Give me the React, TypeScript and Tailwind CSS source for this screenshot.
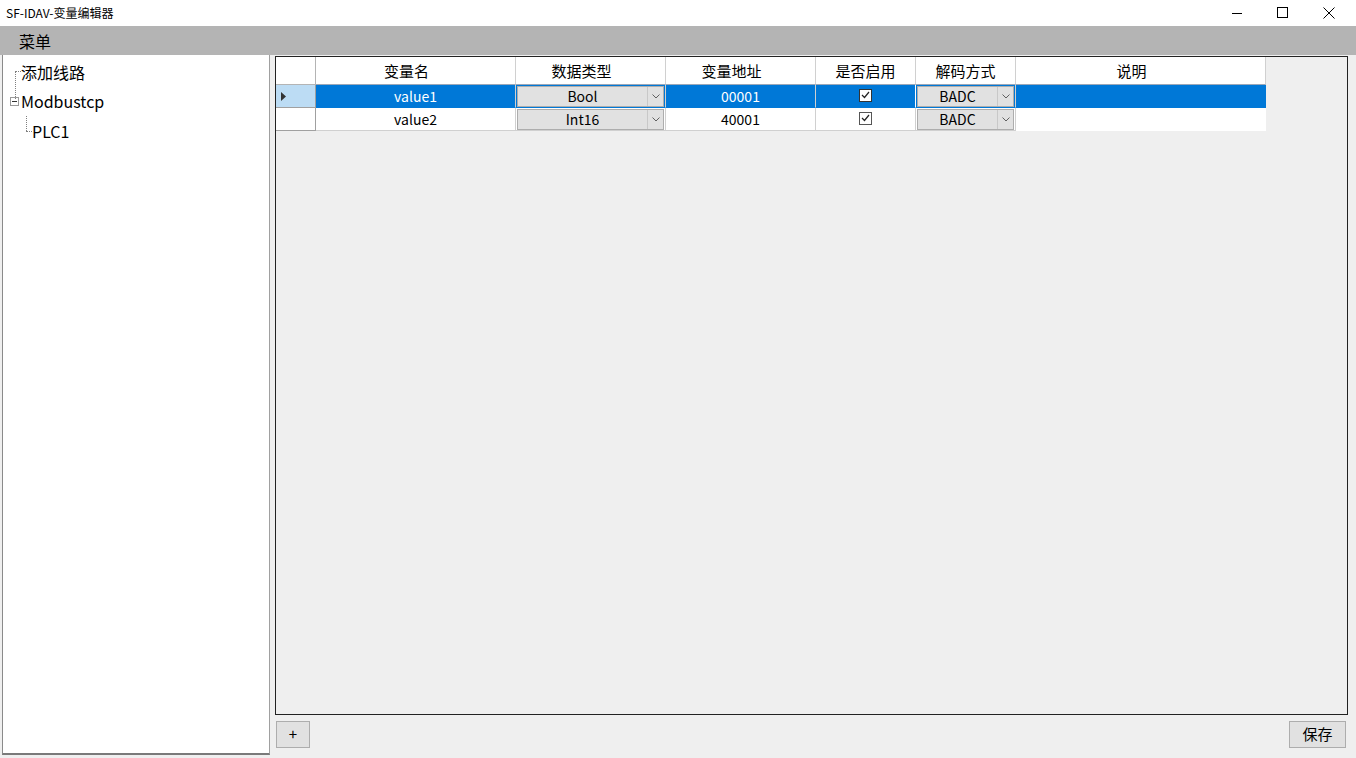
import React from 'react';

const COLS = [
  { key: 'name', title: '变量名', w: 'w-[200px] pr-[18px]' },
  { key: 'type', title: '数据类型', w: 'w-[150px] pr-[18px]' },
  { key: 'addr', title: '变量地址', w: 'w-[150px] pr-[18px]' },
  { key: 'en', title: '是否启用', w: 'w-[100px]' },
  { key: 'dec', title: '解码方式', w: 'w-[100px]' },
  { key: 'desc', title: '说明', w: 'w-[250px] pr-[18px]' },
];

const ROWS = [
  { name: 'value1', type: 'Bool', addr: '00001', en: true, dec: 'BADC' },
  { name: 'value2', type: 'Int16', addr: '40001', en: true, dec: 'BADC' },
];

const FONT = { fontFamily: '"Noto Sans CJK SC", "Noto Sans", sans-serif' };

function Combo({ value }: { value: string }) {
  return (
    <div className="mx-[1px] h-[21px] flex border border-[#adadad] bg-[#e1e1e1] text-black">
      <div className="flex-1 flex items-center justify-center">{value}</div>
      <div className="w-[16px] border-l border-[#c8c8c8] flex items-center justify-center">
        <svg width="8" height="5" viewBox="0 0 8 5"><path d="M0.5 0.5 L4 4 L7.5 0.5" fill="none" stroke="#606060" strokeWidth="1" /></svg>
      </div>
    </div>
  );
}

function Check({ selected }: { selected: boolean }) {
  return (
    <div className={`w-[13px] h-[13px] border ${selected ? 'border-[#333] bg-white' : 'border-[#555] bg-white'} flex items-center justify-center`}>
      <svg width="9" height="8" viewBox="0 0 9 8"><path d="M1 4 L3.5 6.5 L8 1" fill="none" stroke="#222" strokeWidth="1.2" /></svg>
    </div>
  );
}

export default function App() {
  return (
    <div className="w-[1356px] h-[758px] flex flex-col bg-[#efefef] overflow-hidden text-black" style={FONT}>
      {/* title bar */}
      <div className="h-[26px] bg-white flex items-center">
        <span className="pl-[6px] text-[12px] flex-1">SF-IDAV-变量编辑器</span>
        <div className="flex h-full">
          <div className="w-[46px] flex items-center justify-center">
            <svg width="12" height="12" viewBox="0 0 12 12"><path d="M1 6.5 H11" stroke="#000" strokeWidth="1" /></svg>
          </div>
          <div className="w-[46px] flex items-center justify-center">
            <svg width="12" height="12" viewBox="0 0 12 12"><rect x="0.5" y="0.5" width="10" height="10" fill="none" stroke="#000" strokeWidth="1" /></svg>
          </div>
          <div className="w-[46px] flex items-center justify-center mr-[4px]">
            <svg width="12" height="12" viewBox="0 0 12 12"><path d="M0.5 0.5 L11.5 11.5 M11.5 0.5 L0.5 11.5" stroke="#000" strokeWidth="1" /></svg>
          </div>
        </div>
      </div>
      {/* menu bar */}
      <div className="h-[29px] bg-[#b4b4b4] flex items-center">
        <span className="pl-[19px] text-[16px]">菜单</span>
      </div>
      {/* body */}
      <div className="flex-1 flex min-h-0">
        <div className="ml-[2px] w-[268px] mb-[3px] bg-white border-l border-b-2 border-r border-l-[#8a8a8a] border-b-[#7a7a7a] border-r-[#a0a0a0] relative">
          <div className="relative pt-[2px] text-[16px]">
            <div className="absolute left-[12px] top-[16px] h-[28px] border-l border-dotted border-[#808080]" />
            <div className="absolute left-[12px] top-[16px] w-[6px] border-t border-dotted border-[#808080]" />
            <div className="h-[29px] pl-[18px] flex items-center">添加线路</div>
            <div className="h-[30px] flex items-center">
              <div className="ml-[7px] w-[9px] h-[9px] border border-[#9a9a9a] bg-white flex items-center justify-center">
                <div className="w-[5px] border-t border-[#333]" />
              </div>
              <span className="ml-[2px]">Modbustcp</span>
            </div>
            <div className="absolute left-[23px] top-[61px] h-[15px] border-l border-dotted border-[#808080]" />
            <div className="absolute left-[23px] top-[76px] w-[6px] border-t border-dotted border-[#808080]" />
            <div className="h-[29px] pl-[29px] flex items-center">PLC1</div>
          </div>
        </div>
        <div className="flex-1 flex flex-col">
          <div className="ml-[5px] mr-[8px] mt-[1px] h-[659px] border border-[#222] bg-[#efefef] text-[14px]">
            {/* header */}
            <div className="flex h-[28px] text-[15px]">
              <div className="w-[40px] bg-white border-r border-b border-[#b4b4b4]" />
              {COLS.map(c => (
                <div key={c.key} className={`${c.w} bg-white border-r border-b border-[#d0d0d0] border-b-[#9aa7b8] flex items-center justify-center pt-[1px]`}>{c.title}</div>
              ))}
            </div>
            {ROWS.map((r, i) => {
              const sel = i === 0;
              return (
                <div key={r.name} className="flex h-[23px]">
                  <div className={`w-[40px] border-r border-b border-[#a0a0a0] flex items-center pl-[5px] ${sel ? 'bg-[#bcdcf4]' : 'bg-white'}`}>
                    {sel && <svg width="6" height="9" viewBox="0 0 6 9"><path d="M0 0 L5 4.5 L0 9 Z" fill="#333" /></svg>}
                  </div>
                  <div className={`w-[200px] border-r border-b border-[#d0d0d0] flex items-center justify-center pt-[1px] ${sel ? 'bg-[#0078d7] text-white border-b-[#0078d7]' : 'bg-white'}`}>{r.name}</div>
                  <div className={`w-[150px] border-r border-b border-[#d0d0d0] flex items-center ${sel ? 'bg-[#0078d7] border-b-[#0078d7]' : 'bg-white'}`}>
                    <div className="flex-1"><Combo value={r.type} /></div>
                  </div>
                  <div className={`w-[150px] border-r border-b border-[#d0d0d0] flex items-center justify-center pt-[1px] ${sel ? 'bg-[#0078d7] text-white border-b-[#0078d7]' : 'bg-white'}`}>{r.addr}</div>
                  <div className={`w-[100px] border-r border-b border-[#d0d0d0] flex items-center justify-center pb-[2px] ${sel ? 'bg-[#0078d7] border-b-[#0078d7] border-r-white' : 'bg-white'}`}>
                    <Check selected={sel} />
                  </div>
                  <div className={`w-[100px] border-r border-b border-[#d0d0d0] flex items-center ${sel ? 'bg-[#0078d7] border-b-[#0078d7]' : 'bg-white'}`}>
                    <div className="flex-1"><Combo value={r.dec} /></div>
                  </div>
                  <div className={`w-[250px] border-b ${sel ? 'bg-[#0078d7] border-[#0078d7]' : 'bg-white border-white'}`} />
                </div>
              );
            })}
          </div>
          <div className="flex justify-between items-start ml-[6px] mr-[10px] mt-[6px]">
            <button className="w-[34px] h-[27px] bg-[#e1e1e1] border border-[#adadad] text-[15px] flex items-center justify-center">+</button>
            <button className="w-[57px] h-[27px] bg-[#e1e1e1] border border-[#adadad] text-[15px] flex items-center justify-center">保存</button>
          </div>
        </div>
      </div>
    </div>
  );
}
